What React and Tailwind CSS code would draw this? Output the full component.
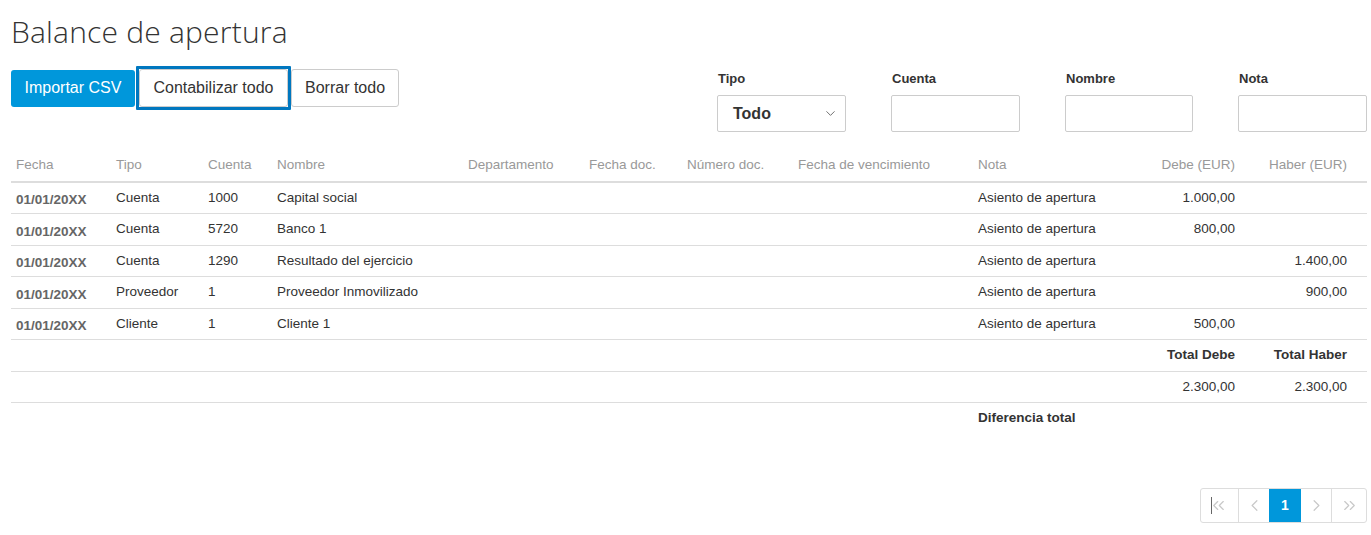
import { ChevronDown, ChevronLeft, ChevronRight, ChevronsLeft, ChevronsRight } from 'lucide-react'

const rows = [
  { fecha: '01/01/20XX', tipo: 'Cuenta', cuenta: '1000', nombre: 'Capital social', nota: 'Asiento de apertura', debe: '1.000,00', haber: '' },
  { fecha: '01/01/20XX', tipo: 'Cuenta', cuenta: '5720', nombre: 'Banco 1', nota: 'Asiento de apertura', debe: '800,00', haber: '' },
  { fecha: '01/01/20XX', tipo: 'Cuenta', cuenta: '1290', nombre: 'Resultado del ejercicio', nota: 'Asiento de apertura', debe: '', haber: '1.400,00' },
  { fecha: '01/01/20XX', tipo: 'Proveedor', cuenta: '1', nombre: 'Proveedor Inmovilizado', nota: 'Asiento de apertura', debe: '', haber: '900,00' },
  { fecha: '01/01/20XX', tipo: 'Cliente', cuenta: '1', nombre: 'Cliente 1', nota: 'Asiento de apertura', debe: '500,00', haber: '' },
]

const headers = [
  'Fecha',
  'Tipo',
  'Cuenta',
  'Nombre',
  'Departamento',
  'Fecha doc.',
  'Número doc.',
  'Fecha de vencimiento',
  'Nota',
]

function Filter({ label, children }) {
  return (
    <div className="flex flex-col">
      <label className="mb-[8px] pl-[1px] text-[13px] font-bold leading-[16px] text-[#333]">{label}</label>
      {children}
    </div>
  )
}

function PageButton({ children, active, className = '' }) {
  return (
    <button
      className={
        'flex h-[33px] items-center justify-center border-l border-[#ddd] first:border-l-0 ' +
        (active ? 'bg-[#0097db] text-white' : 'text-[#c8c8c8]') +
        ' ' +
        className
      }
    >
      {children}
    </button>
  )
}

export default function App() {
  return (
    <div className="h-[535px] bg-white pl-[11px] pr-[4px] font-['Liberation_Sans',Arial,sans-serif] text-[13.5px] text-[#333]">
      <h1 className="pt-[12px] font-['Open_Sans',sans-serif] text-[30px] font-light leading-[40px] tracking-[0.2px] text-[#333]">
        Balance de apertura
      </h1>

      <div className="mt-[11px] flex items-start justify-between">
        <div className="flex items-center pt-[3px]">
          <button className="h-[37px] rounded-[3px] bg-[#0097db] px-[13.5px] text-[16px] text-white">Importar CSV</button>
          <div className="ml-[1px] rounded-[1px] border-[3px] border-[#0077bf] p-0">
            <button className="h-[38px] rounded-[3px] border border-[#ccc] bg-white px-[13.5px] text-[16px] text-[#333]">
              Contabilizar todo
            </button>
          </div>
          <button className="h-[38px] rounded-[3px] border border-[#ccc] bg-white px-[13px] text-[16px] text-[#333]">
            Borrar todo
          </button>
        </div>

        <div className="mt-[8px] flex gap-[45px]">
          <Filter label="Tipo">
            <div className="flex h-[37px] w-[129px] items-center justify-between rounded-[2px] border border-[#ccc] pl-[15px] pr-[7px]">
              <span className="text-[16px] font-bold text-[#333]">Todo</span>
              <ChevronDown size={15} strokeWidth={1.5} className="text-[#666]" />
            </div>
          </Filter>
          <Filter label="Cuenta">
            <input className="h-[37px] w-[129px] rounded-[2px] border border-[#ccc] outline-none" />
          </Filter>
          <Filter label="Nombre">
            <input className="h-[37px] w-[128px] rounded-[2px] border border-[#ccc] outline-none" />
          </Filter>
          <Filter label="Nota">
            <input className="h-[37px] w-[129px] rounded-[2px] border border-[#ccc] outline-none" />
          </Filter>
        </div>
      </div>

      <table className="mt-[20px] w-full table-fixed border-collapse text-left">
        <colgroup>
          <col className="w-[100px]" />
          <col className="w-[92px]" />
          <col className="w-[69px]" />
          <col className="w-[191px]" />
          <col className="w-[121px]" />
          <col className="w-[98px]" />
          <col className="w-[111px]" />
          <col className="w-[180px]" />
          <col className="w-[167px]" />
          <col className="w-[115px]" />
          <col />
        </colgroup>
        <thead>
          <tr className="border-b-2 border-[#ddd]">
            {headers.map((h) => (
              <th key={h} className="h-[30px] pb-[2px] pl-[5px] align-middle font-normal text-[#999]">
                {h}
              </th>
            ))}
            <th className="pb-[2px] pr-[20px] text-right font-normal text-[#999]">Debe (EUR)</th>
            <th className="pb-[2px] pr-[20px] text-right font-normal text-[#999]">Haber (EUR)</th>
          </tr>
        </thead>
        <tbody>
          {rows.map((r, i) => (
            <tr key={i} className="h-[31.5px] border-b border-[#ddd]">
              <td className="pl-[5px] pt-[5px] text-[13.5px] font-bold text-[#666]">{r.fecha}</td>
              <td className="pl-[5px]">{r.tipo}</td>
              <td className="pl-[5px]">{r.cuenta}</td>
              <td className="pl-[5px]">{r.nombre}</td>
              <td />
              <td />
              <td />
              <td />
              <td className="pl-[5px]">{r.nota}</td>
              <td className="pr-[20px] text-right">{r.debe}</td>
              <td className="pr-[20px] text-right">{r.haber}</td>
            </tr>
          ))}
          <tr className="h-[32px] border-b border-[#ddd]">
            <td colSpan={9} />
            <td className="pr-[20px] text-right font-bold">Total Debe</td>
            <td className="pr-[20px] text-right font-bold">Total Haber</td>
          </tr>
          <tr className="h-[31px] border-b border-[#ddd]">
            <td colSpan={9} />
            <td className="pr-[20px] text-right">2.300,00</td>
            <td className="pr-[20px] text-right">2.300,00</td>
          </tr>
          <tr className="h-[31px]">
            <td colSpan={8} />
            <td className="pl-[5px] font-bold">Diferencia total</td>
            <td />
            <td />
          </tr>
        </tbody>
      </table>

      <div className="mt-[54px] flex justify-end">
        <div className="flex overflow-hidden rounded-[3px] border border-[#ddd]">
          <PageButton className="w-[37px]">
            <span className="mr-[-3px] h-[17px] w-[1px] bg-[#666]" />
            <ChevronsLeft size={19} strokeWidth={1.5} />
          </PageButton>
          <PageButton className="w-[31px]">
            <ChevronLeft size={19} strokeWidth={1.5} />
          </PageButton>
          <PageButton active className="w-[31px] border-l-[#0097db] text-[14px] font-bold">
            1
          </PageButton>
          <PageButton className="w-[31px] border-l-[#0097db]">
            <ChevronRight size={19} strokeWidth={1.5} />
          </PageButton>
          <PageButton className="w-[35px]">
            <ChevronsRight size={19} strokeWidth={1.5} />
          </PageButton>
        </div>
      </div>
    </div>
  )
}
